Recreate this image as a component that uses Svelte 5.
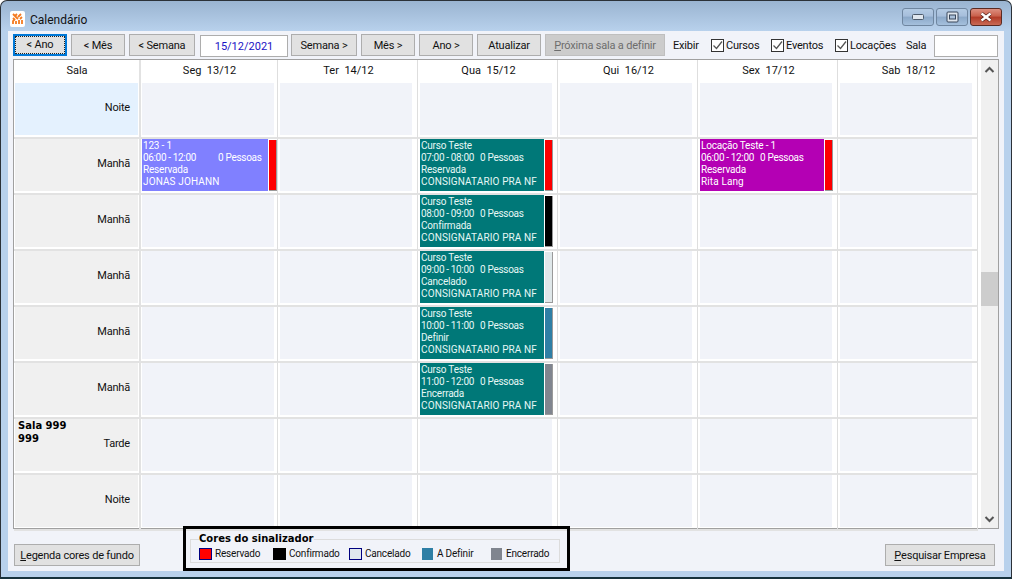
<script>
  const days = [
    { label: 'Seg  13/12', cls: 'first' },
    { label: 'Ter  14/12', cls: '' },
    { label: 'Qua  15/12', cls: '' },
    { label: 'Qui  16/12', cls: '' },
    { label: 'Sex  17/12', cls: '' },
    { label: 'Sab  18/12', cls: '' }
  ];
  const curso = (time, status, color) => ({
    kind: 'teal', lines: ['Curso Teste', time, status, 'CONSIGNATARIO PRA NF'], color, gap: 'short'
  });
  const rows = [
    { turno: 'Noite', sel: true, events: {} },
    { turno: 'Manhã', events: {
      0: { kind: 'blue', lines: ['123 - 1', '06:00 - 12:00', 'Reservada', 'JONAS JOHANN'], color: '#ff0000', gap: 'long' },
      2: curso('07:00 - 08:00', 'Reservada', '#ff0000'),
      4: { kind: 'purple', lines: ['Locação Teste - 1', '06:00 - 12:00', 'Reservada', 'Rita Lang'], color: '#ff0000', gap: 'short' }
    } },
    { turno: 'Manhã', events: { 2: curso('08:00 - 09:00', 'Confirmada', '#000000') } },
    { turno: 'Manhã', events: { 2: curso('09:00 - 10:00', 'Cancelado', '#e0e8ea') } },
    { turno: 'Manhã', events: { 2: curso('10:00 - 11:00', 'Definir', '#2f7fa5') } },
    { turno: 'Manhã', events: { 2: curso('11:00 - 12:00', 'Encerrada', '#80858f') } },
    { turno: 'Tarde', room: ['Sala 999', '999'], events: {} },
    { turno: 'Noite', events: {} }
  ];
  const legend = [
    { name: 'Reservado', cls: 'sw-res' },
    { name: 'Confirmado', cls: 'sw-con' },
    { name: 'Cancelado', cls: 'sw-can' },
    { name: 'A Definir', cls: 'sw-def' },
    { name: 'Encerrado', cls: 'sw-enc' }
  ];
</script>

<div class="window">
  <header class="titlebar">
    <span class="appicon">
      <svg width="15" height="16" viewBox="0 0 15 16">
        <rect x="0" y="0" width="15" height="16" rx="2" fill="#fff" />
        <path d="M3 3l2 2M7 3l-2 2M5 5l3 3M11 3l-3 3M12 6l-2 2M3 7l2 2M3 13v-3l2-2M6 13v-3M9 13v-4M12 13v-4" stroke="#f47a20" stroke-width="1.8" fill="none" />
      </svg>
    </span>
    <span class="title">Calendário</span>
    <div class="winbtns">
      <button class="wb">
        <svg width="12" height="6" viewBox="0 0 12 6"><rect x="0.5" y="0.5" width="11" height="5" rx="1" fill="#dfe6ee" stroke="#4d5a6b" /></svg>
      </button>
      <button class="wb">
        <svg width="13" height="12" viewBox="0 0 13 12"><rect x="1" y="1" width="11" height="10" rx="1" fill="#dfe6ee" stroke="#39465a" /><rect x="3.5" y="4" width="6" height="4" fill="#a9c0da" stroke="#39465a" /></svg>
      </button>
      <button class="wb close">
        <svg width="14" height="10" viewBox="0 0 14 10"><path d="M2.5 1.5l9 7M11.5 1.5l-9 7" stroke="#4b1c14" stroke-width="3.6" /><path d="M2.5 1.5l9 7M11.5 1.5l-9 7" stroke="#fff" stroke-width="2.4" /></svg>
      </button>
    </div>
  </header>

  <main class="client">
    <div class="toolbar">
      <button class="btn focus w-ano"><span>&lt; Ano</span></button>
      <button class="btn w-ano">&lt; Mês</button>
      <button class="btn w-sem">&lt; Semana</button>
      <div class="input date">15/12/2021</div>
      <button class="btn w-sem">Semana &gt;</button>
      <button class="btn w-ano">Mês &gt;</button>
      <button class="btn w-ano">Ano &gt;</button>
      <button class="btn w-atu">Atualizar</button>
      <button class="btn disabled w-prox"><u>P</u>róxima sala a definir</button>
      <span class="lbl exibir">Exibir</span>
      <label class="check c1"><span class="box"><svg width="13" height="13" viewBox="0 0 13 13"><path d="M2.5 6.5l3 3 5.5-7" fill="none" stroke="#555" stroke-width="1.3" /></svg></span>Cursos</label>
      <label class="check c2"><span class="box"><svg width="13" height="13" viewBox="0 0 13 13"><path d="M2.5 6.5l3 3 5.5-7" fill="none" stroke="#555" stroke-width="1.3" /></svg></span>Eventos</label>
      <label class="check c3"><span class="box"><svg width="13" height="13" viewBox="0 0 13 13"><path d="M2.5 6.5l3 3 5.5-7" fill="none" stroke="#555" stroke-width="1.3" /></svg></span>Locações</label>
      <span class="lbl sala">Sala</span>
      <div class="input salainput"></div>
    </div>

    <section class="grid">
      <div class="table">
        <div class="row head">
          <div class="col roomcol"><span class="hd">Sala</span></div>
          {#each days as d}
            <div class="col daycol {d.cls}"><span class="hd">{d.label}</span></div>
          {/each}
        </div>
        {#each rows as r}
          <div class="row body">
            <div class="col roomcol">
              <div class="roomcell" class:sel={r.sel}>
                {#if r.room}
                  <div class="roomname">{r.room[0]}<br />{r.room[1]}</div>
                {/if}
                <span class="turno">{r.turno}</span>
              </div>
            </div>
            {#each days as d, i}
              <div class="col daycol {d.cls}">
                {#if r.events[i]}
                  <div class="eventwrap">
                    <div class="event {r.events[i].kind}">
                      {#each r.events[i].lines as line, n}
                        <div class="eline l{n}">
                          {line}{#if n === 1}<span class="pess {r.events[i].gap}">0 Pessoas</span>{/if}
                        </div>
                      {/each}
                    </div>
                    <div class="flag" style="background:{r.events[i].color}"></div>
                  </div>
                {:else}
                  <div class="cell"></div>
                {/if}
              </div>
            {/each}
          </div>
        {/each}
      </div>
      <div class="scrollbar">
        <svg class="arrow" width="11" height="8" viewBox="0 0 11 8"><path d="M1.5 6l4-4 4 4" fill="none" stroke="#555" stroke-width="2" /></svg>
        <div class="thumb"></div>
        <svg class="arrow down" width="11" height="8" viewBox="0 0 11 8"><path d="M1.5 2l4 4 4-4" fill="none" stroke="#555" stroke-width="2" /></svg>
      </div>
    </section>

    <footer class="footer">
      <button class="btn w-leg"><u>L</u>egenda cores de fundo</button>
      <div class="legendframe">
        <fieldset class="legendbox">
          <legend>Cores do sinalizador</legend>
          <div class="items">
            {#each legend as l}
              <div class="item {l.cls}"><span class="swatch"></span>{l.name}</div>
            {/each}
          </div>
        </fieldset>
      </div>
      <button class="btn w-pes"><u>P</u>esquisar Empresa</button>
    </footer>
  </main>
</div>

<style>
  :global(body) { margin: 0; background: #fff; }
  .window {
    box-sizing: border-box;
    width: 1012px;
    height: 579px;
    display: flex;
    flex-direction: column;
    padding: 0 7px 5px 7px;
    border: 1px solid #2b3138;
    border-bottom: 2px solid #16323c;
    border-radius: 7px 7px 0 0;
    background: #b8d1ec;
    background-image: linear-gradient(#9ab4d1, #b8d1ec 30px);
    font-family: Roboto, sans-serif;
    font-size: 11px;
    letter-spacing: -0.2px;
    color: #111;
    overflow: hidden;
  }
  .titlebar { height: 30px; flex: none; display: flex; align-items: center; margin-left: 2px; }
  .appicon { width: 15px; height: 16px; display: block; margin-top: 5px; }
  .appicon svg { display: block; }
  .title { font-size: 12px; letter-spacing: 0; margin: 8px 0 0 5px; color: #111; }
  .winbtns { margin-left: auto; margin-right: 2px; margin-top: 1px; display: flex; gap: 2px; }
  .wb {
    width: 32px; height: 18px; padding: 0; display: flex; align-items: center; justify-content: center;
    border: 1px solid #6f86a0; border-radius: 3px;
    background: linear-gradient(#b4cbe4 0, #a6bedb 45%, #8ba8c8 50%, #a5c0dd 100%);
  }
  .wb.close { border-color: #5a2a22; background: linear-gradient(#dd8f80 0, #c9604b 45%, #b13a26 50%, #c96a55 100%); }
  .wb svg { display: block; }

  .client { flex: 1; min-height: 0; background: #f1f3f9; display: flex; flex-direction: column; padding: 3px 5px 1px 5px; margin-bottom: 1px; }

  .toolbar { display: flex; align-items: flex-start; height: 25px; flex: none; }
  .btn {
    box-sizing: border-box; height: 22px; padding: 0; margin: 0 4px 0 0;
    background: #e1e1e1; border: 1px solid #adadad;
    font: 11px Roboto, sans-serif; letter-spacing: -0.2px; color: #111; flex: none; white-space: nowrap;
  }
  .w-ano { width: 54px; }
  .w-sem { width: 66px; }
  .w-atu { width: 64px; }
  .w-prox { width: 120px; margin-right: 8px; }
  .focus { border: 2px solid #0078d7; padding: 0; }
  .focus span { display: block; margin: 0; line-height: 18px; outline: 1px dotted #222; outline-offset: -1px; }
  .disabled { background: #cccccc; border-color: #bfbfbf; color: #6d6d6d; }
  .input { box-sizing: border-box; height: 22px; margin-top: 1px; background: #fff; border: 1px solid #adadad; }
  .date { width: 88px; margin: 1px 3px 0 1px; color: #1a12c4; text-align: center; line-height: 21px; letter-spacing: 0; }
  .lbl { line-height: 14px; margin-top: 5px; }
  .exibir { width: 38px; }
  .check { display: flex; align-items: flex-start; line-height: 14px; margin-top: 5px; }
  .box { box-sizing: border-box; width: 13px; height: 13px; margin-right: 2px; background: #fff; border: 1px solid #333; display: block; position: relative; }
  .box svg { position: absolute; left: -1px; top: -1px; }
  .c1 { width: 60px; }
  .c2 { width: 64px; }
  .c3 { width: 71px; }
  .sala { width: 28px; }
  .salainput { width: 64px; }

  .grid {
    box-sizing: border-box; height: 470px; flex: none; display: flex; background: #fff;
    border: 1px solid #a0a0a0;
  }
  .table { width: 964px; flex: none; }
  .row { display: flex; }
  .head { height: 23px; }
  .body { height: 56px; }
  .col { box-sizing: border-box; height: 100%; border-right: 1px solid #dedede; flex: none; }
  .roomcol { width: 127px; padding-left: 1px; border-right: 2px solid #e2e2e2; }
  .daycol { width: 140px; padding-left: 2px; }
  .daycol.first { width: 137px; padding-left: 1px; }
  .body .col { border-bottom: 2px solid #e2e2e2; padding-bottom: 1px; }
  .hd { display: block; text-align: center; line-height: 22px; white-space: pre; letter-spacing: 0; }
  .roomcell { position: relative; box-sizing: border-box; width: 123px; height: 52px; background: #f0f0f0; text-align: right; padding-right: 8px; line-height: 50px; }
  .roomcell.sel { background: #e4f1fe; }
  .roomname { position: absolute; left: 3px; top: 0; text-align: left; font: 700 10px/13px "DejaVu Sans", sans-serif; letter-spacing: 0; color: #000; }
  .cell { width: 132px; height: 52px; background: #f1f3f9; }
  .eventwrap { display: flex; height: 52px; width: 133px; gap: 1px; }
  .first .eventwrap { width: 135px; }
  .event { flex: 1; min-width: 0; color: #fff; font-size: 10px; line-height: 12px; padding: 1px 0 0 1px; box-sizing: border-box; white-space: pre; }
  .eline { height: 12px; }
  .l1 { letter-spacing: -0.35px; }
  .l3 { letter-spacing: 0.12px; }
  .teal { background: #007878; color: #e6f7f5; }
  .blue { background: #8080ff; }
  .purple { background: #b400b4; }
  .pess { display: inline-block; letter-spacing: -0.3px; }
  .pess.short { margin-left: 6px; }
  .pess.long { margin-left: 22px; }
  .flag { width: 8px; flex: none; box-sizing: border-box; margin-top: 1px; border-right: 1px solid #9a9a9a; border-bottom: 1px solid #9a9a9a; }

  .scrollbar { position: relative; width: 17px; margin-left: 3px; flex: none; background: #f0f0f0; }
  .arrow { position: absolute; left: 3px; top: 6px; }
  .arrow.down { top: auto; bottom: 5px; }
  .thumb { position: absolute; left: 0; right: 0; top: 212px; height: 34px; background: #cdcdcd; }

  .footer { flex: 1; position: relative; display: flex; align-items: flex-start; padding-top: 15px; }
  .w-leg { width: 126px; margin-left: 1px; }
  .w-pes { width: 110px; margin: 0 4px 0 auto; }
  .legendframe {
    position: absolute; left: 170px; top: -3px; box-sizing: border-box; width: 387px; height: 45px;
    border: 3px solid #000; padding: 10px 7px 5px 4px;
  }
  .legendbox { box-sizing: border-box; margin: 0; padding: 0; height: 24px; border: 1px solid #dcdcdc; position: relative; }
  legend { position: absolute; left: 8px; top: -8px; padding: 0; background: #f1f3f9; font: 700 10px/14px "DejaVu Sans", sans-serif; letter-spacing: 0; color: #000; }
  .items { display: flex; font-size: 10px; letter-spacing: -0.2px; color: #111; margin: 8px 0 0 8px; line-height: 12px; }
  .item { display: flex; align-items: center; }
  .swatch { display: block; box-sizing: border-box; margin-right: 3px; width: 13px; height: 12px; border: 1px solid #00007f; }
  .sw-res { width: 74px; }
  .sw-res .swatch { background: #ff0000; }
  .sw-con { width: 76px; }
  .sw-con .swatch { background: #000; border-color: #000; }
  .sw-can { width: 73px; }
  .sw-can .swatch { background: #e0e8ee; }
  .sw-def { width: 69px; }
  .sw-def .swatch { background: #2f7fa5; border: 0; width: 11px; margin-right: 4px; }
  .sw-enc .swatch { background: #80858f; border: 0; width: 11px; margin-right: 4px; }
</style>
